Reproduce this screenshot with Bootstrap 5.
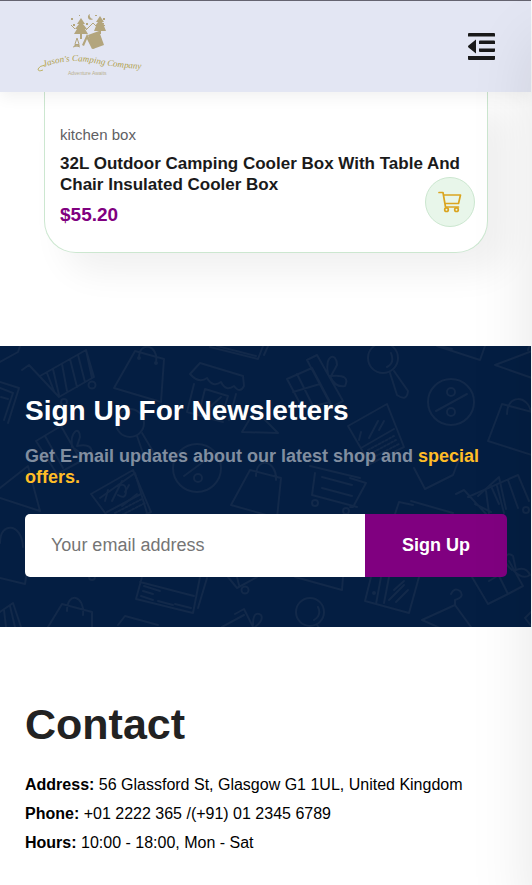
<!DOCTYPE html>
<html lang="en">
<head>
<meta charset="utf-8">
<meta name="viewport" content="width=device-width, initial-scale=1">
<title>Jason's Camping Company</title>
<link href="https://cdn.jsdelivr.net/npm/bootstrap@5.3.0/dist/css/bootstrap.min.css" rel="stylesheet">
<style>
body { font-family: "Liberation Sans", Arial, sans-serif; color: #000; background: #fff; overflow-x: hidden; }
.page { padding-right: 1px; }
.site-header { height: 92px; padding: 0 36px; background: #e3e6f3; border-top: 1px solid #656470; box-shadow: 0 5px 15px rgba(0,0,0,.06); z-index: 5; }
.menu-btn { line-height: 0; color: #1a1a1a; }
.shop { padding: 0 43px 93px 44px; }
.product { padding: 32px 12px 25px 15px; border: 1px solid #cce7d0; border-top: 0; border-radius: 0 0 32px 32px; background: #fff; box-shadow: 20px 20px 34px rgba(0,0,0,.06); }
.product-kind { font-size: 15px; line-height: 21px; color: #606063; }
.product-name { font-size: 17px; line-height: 21px; color: #1a1a1a; margin: 8px 0; }
.product-price { font-size: 19px; line-height: 24px; color: #800080; }
.cart-btn { right: 12px; bottom: 25px; width: 50px; height: 50px; border-radius: 50%; background: #e8f6ea; border: 1px solid #cce7d0; color: #daa520; }
.newsletter { background: #041e42; padding: 48px 24px 50px 25px; overflow: hidden; }
.pattern { inset: 0; }
.newsletter h2 { font-size: 28px; line-height: 34px; margin-bottom: 18px; }
.newsletter p { font-size: 18px; line-height: 21px; color: #818ea0; margin-bottom: 26px; }
.newsletter p a { color: #ffbd27; }
.signup .form-control { height: 63px; padding: 0 26px; font-size: 18px; border: 0; border-radius: 5px; }
.signup .form-control::placeholder { color: #757575; }
.signup .btn { width: 142px; font-size: 18px; background: #800080; border: 0; border-radius: 5px; }
.contact { padding: 70px 25px 28px; }
.contact h2 { font-size: 43px; line-height: 54px; color: #222; margin-bottom: 19px; }
.contact p { font-size: 16px; line-height: 29px; margin: 0; }
.drawer { position: fixed; top: 0; bottom: 0; left: 100%; width: 300px; background: #e3e6f3; box-shadow: 0 40px 60px rgba(0,0,0,.1); z-index: 10; }
</style>
<script src="https://cdn.jsdelivr.net/npm/bootstrap@5.3.0/dist/js/bootstrap.bundle.min.js"></script>
</head>
<body>
<div class="page">
<header class="site-header d-flex align-items-center justify-content-between position-relative">
  <a href="#" aria-label="Jason's Camping Company">
    <svg class="d-block" width="120" height="72" viewBox="36 10 120 72" fill="#b3a57d">
      <path d="M81 17l-4 6h2l-4 5h2l-3 5h14l-3-5h2l-4-5h2z"/><path d="M80 33h2v5h-2z"/>
      <path d="M100 15l-4 6h2l-3 4h1l-2 5h12l-2-5h1l-3-4h2z"/><path d="M99 30h2v3h-2z"/>
      <path d="M88 34l11-4 5 14-11 4z"/><path d="M87 33l-5 11 2 1 3-7 5 10 3-1z"/>
      <path d="M90 13a3 3 0 1 0 3 5a3.500 3.500 0 0 1-3-5z"/>
      <g fill="none" stroke="#b3a57d"><path d="M86 29l7-7 3 3M71 24l4 4M105 24l-3 3M73 46l7-2M74 44l6 2" stroke-width="1"/><path d="M77 37l-2 6q1 2 2 0q1 2 2 0z" stroke-width="1"/></g>
      <path d="M71 17h2v2h-2zM79 14h1v1h-1zM95 14h2v1h-2zM103 17h2v2h-2zM73 23h2v2h-2zM86 22h2v2h-2zM102 22h2v1h-2z"/>
      <path id="wave" d="M44 66C60 60 76 59 93 62S124 68 154 68" fill="none"/>
      <path d="M45 64q-6 1-7 4q0 3 5 1" fill="none" stroke="#b5a642" stroke-width=".8"/>
      <text font-family="Liberation Serif, serif" font-style="italic" font-size="9" fill="#b0a04c"><textPath href="#wave">Jason's Camping Company</textPath></text>
      <text x="68" y="74" font-family="Liberation Sans, sans-serif" font-size="5" fill="#b9b08f">Adventure Awaits</text>
    </svg>
  </a>
  <button class="menu-btn btn p-0 border-0" type="button" aria-label="Open menu">
    <svg width="27" height="27" viewBox="0 0 27 27" fill="currentColor"><path d="M1 0h25a1 1 0 0 1 1 1v2.500H0V1a1 1 0 0 1 1-1zM12 7.500h14a1 1 0 0 1 1 1V11H11V8.500a1 1 0 0 1 1-1zM11 15.500h16V18a1 1 0 0 1-1 1H12a1 1 0 0 1-1-1zM0 23h27v3a1 1 0 0 1-1 1H1a1 1 0 0 1-1-1zM8 6.500v14L.5 14.500q-1-1 0-2z"/></svg>
  </button>
</header>

<main>
<section class="shop">
  <article class="product position-relative">
    <div class="product-kind">kitchen box</div>
    <h5 class="product-name fw-bold">32L Outdoor Camping Cooler Box With Table And Chair Insulated Cooler Box</h5>
    <div class="product-price fw-bold">$55.20</div>
    <button class="cart-btn btn p-0 position-absolute d-flex align-items-center justify-content-center" type="button" aria-label="Add to cart">
      <svg width="24" height="22" viewBox="0 0 24 22" fill="none" stroke="currentColor" stroke-width="1.700" stroke-linejoin="round" stroke-linecap="round"><path d="M1 1.500h4l2.500 14.500h13M5.500 4h17l-2 8.500H7"/><circle cx="8.500" cy="18.700" r="1.800"/><circle cx="18.500" cy="18.700" r="1.800"/></svg>
    </button>
  </article>
</section>

<section class="newsletter position-relative">
  <svg class="pattern position-absolute w-100 h-100" fill="none" stroke="#12294a" stroke-width="2" stroke-linejoin="round" stroke-linecap="round" aria-hidden="true">
    <path d="M0 16L18 6L20 0M0 36L19 42L8 77M0 42L13 47L4 74M1 51l7 2"/>
    <path d="M22 24l7-5L59 51l35-20L86 4L40 30M86 4l6 28M78 9l7 27M70 13l7 28M62 18l5 27M53 23l6 26M47 27l7 18"/><circle cx="64" cy="56" r="3"/><circle cx="92" cy="39" r="3.500"/>
    <path d="M135 5l29 8l-3 43l-47-14zM139 12c0-18 20-13 17 4"/><circle cx="139" cy="12" r="1"/><circle cx="156" cy="17" r="1"/>
    <circle cx="130" cy="77" r="14"/><path d="M137 90l7 20q8 5 10-3l-12-20"/>
    <path d="M36 95l25-15l20 35l-24 13zM45 90l18 32M72 101c-2-17 8-21 8-10l-3 9q14-3 15 6q-5 6-17-3"/>
    <path d="M100 152l35-25l12 40M118 140q8-4 8 5t-8 4M137 148l-15 12"/>
    <path d="M210 1l48 12l5-13M217 0l39 10M268 0l-4 9"/>
    <path d="M200 17l43 13l1 10q-4 8-10 0q-8 6-13-4q-8 6-14-4q-8 6-17-4zM194 38l-7 28l36 10M236 48l-7 26M205 43l23 7l-6 20M205 43l-6 24M211 60l10-9"/>
    <path d="M287 33l25-11l18 34l-27 7zM297 28l16 32M293 46l27-8M307 14l10-5l26 46l-11 6zM328 28c-4-20 9-22 9-9l-6 11q20-2 14 10q-10 2-15-10"/>
    <path d="M242 86l13-22l23 23z"/>
    <circle cx="383" cy="12" r="15"/><path d="M391 7q4 10-4 14M390 27l7 22q10 7 11-4l-14-20M437 0l43 14l5-14M440 0l12 3"/>
    <path d="M532 5l-37 14l37 13M528 4q1-5 4-5"/>
    <circle cx="451" cy="56" r="23"/><path d="M436 65l31-17"/><circle cx="451" cy="46" r="4"/><circle cx="451" cy="66" r="4"/>
    <path d="M532 66l-30-8l-14 37l44 14M507 68c0-20 21-19 24-2"/>
    <path d="M348 80l39-22l17 43l-34 17zM361 102l33-19M361 86l-2 8M378 75l-9 17M384 75l-5 9"/><path d="M368 104l26-14M370 108l26-14M372 112l27-14" stroke-dasharray="2 2"/>
    <path d="M414 122l11 21l28-14l7-18M350 132l16 5l-13 24h-3M478 150l21-19l7 32M491 140l8 18"/>
    <circle cx="197" cy="122" r="24"/><path d="M184 130l19-14"/><circle cx="198" cy="132" r="4"/>
    <path d="M250 124l31 8l-4 40l-46-13zM256 130c0-20 21-16 20 4M310 120l50 12M315 127l-3 22l45 12M322 131l30 8M322 142l30 8"/><circle cx="315" cy="157" r="3"/><circle cx="346" cy="165" r="3"/>
    <path d="M0 142L28 120L40 165L0 152M91 148l42-24l18 42l-34 17zM107 166l34-18M108 144l-3 11M122 135l-10 20M129 139l-4 7"/><path d="M115 167l27-14M118 171l27-14" stroke-dasharray="2 2"/>
    <path d="M0 197c0-22 22-20 23 4M0 232l25 6l2-13M0 266l13-9l8 24M4 264l2 17M10 260l5 21"/>
    <path d="M48 281l14-23l30 8v15M67 265c0-20 18-16 16 4M118 279l7-9l33 9"/><circle cx="92" cy="231" r="3"/>
    <path d="M142 231l-6 22l57 14l7-36M140 236l54 14M144 240l16 5M143 245l10 3M141 250l12 4M158 255l15 4M207 232l-9 30M175 258l16 4"/>
    <path d="M228 231l9 11l20-11M237 231l2 8"/><circle cx="245" cy="244" r="3.500"/>
    <path d="M295 231l47 13l1-13M222 281l22-12M235 268l9-5l10 20M253 279q0-15 8-10q3 5-6 12"/>
    <circle cx="310" cy="266" r="14"/><path d="M318 261q4 8-4 13M317 279l3 4"/>
    <path d="M371 231l-6 24l44 12l10-36M381 231l-5 27M389 231l-5 26M394 244l10-9M389 254l15-15M396 256l12-12"/><circle cx="374" cy="247" r="1"/>
    <path d="M395 168l4-12l14 3M411 155l42 12M422 274l33-15l16 22M422 274l18 8M455 259v-5q10-3 5-9q-6-4-9 3"/>
    <path d="M472 231l16 27l20-10l-10-20M508 248l15-8l-14-25M489 235l10-6M512 224c-12-10-5-20 1-14l3 14q10-4 14 5q-7 5-16-4"/>
    <path d="M456 148l8-4l22 24M468 151l50-22l11 26M475 158l16 8M486 145l3 22M497 140l7 27M508 134l10 28M532 265l-7 7l7 9"/><circle cx="526" cy="164" r="3"/>
  </svg>
  <div class="position-relative">
    <h2 class="fw-bold text-white">Sign Up For Newsletters</h2>
    <p class="fw-bold">Get E-mail updates about our latest shop and <a class="text-decoration-none" href="#">special offers.</a></p>
    <form>
      <label class="visually-hidden" for="email">Your email address</label>
      <div class="signup input-group">
        <input class="form-control" id="email" type="email" placeholder="Your email address">
        <button class="btn text-white fw-bold" type="button">Sign Up</button>
      </div>
    </form>
  </div>
</section>
</main>

<footer class="contact">
  <h2 class="fw-bold">Contact</h2>
  <p><strong>Address:</strong> 56 Glassford St, Glasgow G1 1UL, United Kingdom</p>
  <p><strong>Phone:</strong> +01 2222 365 /(+91) 01 2345 6789</p>
  <p><strong>Hours:</strong> 10:00 - 18:00, Mon - Sat</p>
</footer>
</div>
<div class="drawer"></div>
</body>
</html>
